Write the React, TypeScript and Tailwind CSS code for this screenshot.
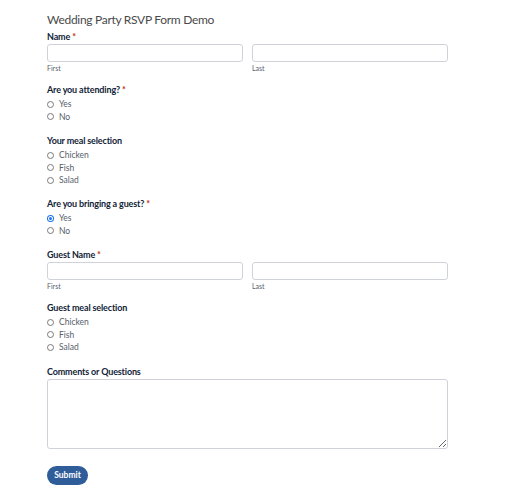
import React from 'react';

const font = { fontFamily: 'Lato, "Open Sans", sans-serif' };

const Req = () => <span className="text-[#c02b0a] ml-[2px]">*</span>;

const Label: React.FC<{ text: string; required?: boolean; className?: string }> = ({ text, required, className = '' }) => (
  <div className={`h-[12px] leading-[12px] text-[9px] tracking-[-0.15px] font-bold text-[#112337] ${className}`}>
    {text}
    {required && <Req />}
  </div>
);

const Radio: React.FC<{ label: string; checked?: boolean }> = ({ label, checked }) => (
  <div className="h-[12.5px] flex items-center gap-[5px]">
    {checked ? (
      <span className="w-[7px] h-[7px] rounded-full bg-[#1a73e8] flex items-center justify-center">
        <span className="w-[3px] h-[3px] rounded-full bg-[#1a73e8] ring-1 ring-white" />
      </span>
    ) : (
      <span className="w-[7px] h-[7px] rounded-full border border-[#7a7a7a] bg-white" />
    )}
    <span className="text-[8.5px] text-[#585e6a] leading-[12px]">{label}</span>
  </div>
);

const RadioGroup: React.FC<{ options: string[]; checked?: string }> = ({ options, checked }) => (
  <div className="mt-[2px]">
    {options.map((o) => (
      <Radio key={o} label={o} checked={o === checked} />
    ))}
  </div>
);

const NameFields = () => (
  <div className="mt-px grid grid-cols-2 gap-[9px]">
    {['First', 'Last'].map((s) => (
      <div key={s}>
        <div className="h-[18px] border border-[#cfd3d8] rounded-[3px] bg-white" />
        <div className="mt-px h-[10px] leading-[10px] text-[7px] text-[#585e6a]">{s}</div>
      </div>
    ))}
  </div>
);

export default function App() {
  return (
    <div className="min-h-[500px] bg-white" style={font}>
      <div className="pl-[47px] pt-[11px] w-[448px]">
        <h1 className="h-[17px] leading-[17px] text-[12px] tracking-[-0.3px] text-[#4a4a4a]">Wedding Party RSVP Form Demo</h1>

        <Label text="Name" required className="mt-[3px]" />
        <NameFields />

        <Label text="Are you attending?" required className="mt-[11px]" />
        <RadioGroup options={['Yes', 'No']} />

        <Label text="Your meal selection" className="mt-[12px]" />
        <RadioGroup options={['Chicken', 'Fish', 'Salad']} />

        <Label text="Are you bringing a guest?" required className="mt-[11.5px]" />
        <RadioGroup options={['Yes', 'No']} checked="Yes" />

        <Label text="Guest Name" required className="mt-[12px]" />
        <NameFields />

        <Label text="Guest meal selection" className="mt-[11px]" />
        <RadioGroup options={['Chicken', 'Fish', 'Salad']} />

        <Label text="Comments or Questions" className="mt-[12.5px]" />
        <textarea className="mt-px block w-full h-[70px] border border-[#cfd3d8] rounded-[3px] bg-white resize-y" />

        <button className="mt-[17px] h-[19px] w-[41px] rounded-full bg-[#2f5d99] text-white text-[8.5px] font-bold">
          Submit
        </button>
      </div>
    </div>
  );
}
